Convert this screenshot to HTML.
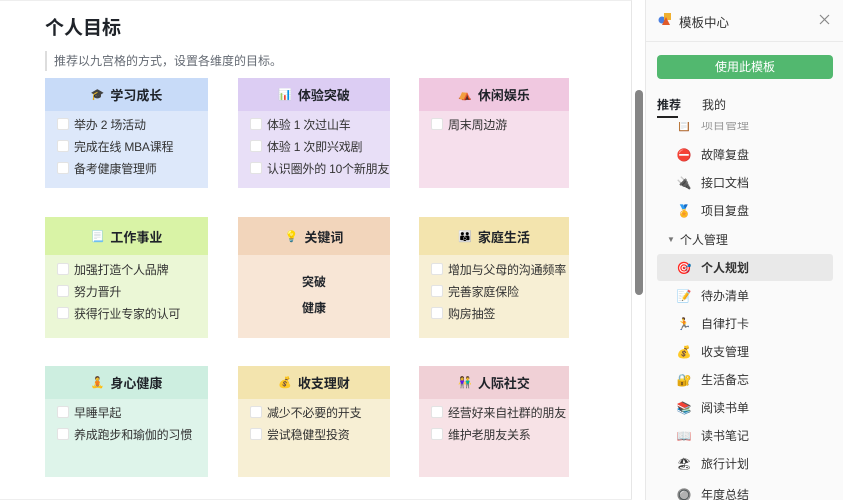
<!DOCTYPE html>
<html><head><meta charset="utf-8"><style>
*{box-sizing:border-box;margin:0;padding:0}
body{width:843px;height:500px;overflow:hidden;background:#fff;font-family:"Liberation Sans","Noto Sans CJK SC",sans-serif;color:#1f2329;position:relative}
.main{position:absolute;left:0;top:0;width:632px;height:500px;border-right:1px solid #e6e6e6;border-top:1px solid #eee}
h1{position:absolute;left:45px;top:12px;font-size:19px;font-weight:600}
.quote{position:absolute;left:45px;top:50px;height:20px;border-left:2px solid #ddd;padding-left:7px;font-size:12px;color:#646a73;line-height:20px}
.card{position:absolute}
.card .h{display:flex;align-items:center;justify-content:center;font-size:13px;font-weight:bold;gap:6px}
.card .b{padding-top:2px}
.it{display:flex;align-items:center;height:22px;padding-left:12px;font-size:12px;color:#333;white-space:nowrap;letter-spacing:-0.2px}
.cb{width:12px;height:12px;background:#fff;border:1px solid #e3e3e3;border-radius:2px;margin-right:5px;flex:none}
.kw{text-align:center;font-size:12px;font-weight:bold;line-height:26px;padding-top:14px}
.ico{font-size:11px}
.scroll{position:absolute;left:635px;top:90px;width:8px;height:205px;background:#858585;border-radius:4px}
.side{position:absolute;left:645px;top:0;width:198px;height:500px;background:#fafafa;border-left:1px solid #e8e8e8;overflow:hidden}
.sh{height:42px;border-bottom:1px solid #eaeaea;position:relative}
.sh .t{position:absolute;left:33px;top:12px;font-size:12.5px;color:#333}
.btn{position:absolute;left:11px;top:55px;width:176px;height:24px;background:#52b86f;border-radius:4px;color:#fff;font-size:12px;text-align:center;line-height:24px}
.tabs{position:absolute;left:11px;top:96px;font-size:12px}
.tabs span{position:absolute;white-space:nowrap}
.ul{position:absolute;left:11px;top:116px;width:21px;height:2px;background:#222}
.li{position:absolute;left:11px;width:176px;height:27px;font-size:12px;color:#333;display:flex;align-items:center}
.li .e{width:44px;text-align:center;font-size:12px;padding-left:10px}
.li.sel{background:#e9e9e9;border-radius:3px;font-weight:600}
</style></head><body>
<div class="main">
<h1>个人目标</h1>
<div class="quote">推荐以九宫格的方式，设置各维度的目标。</div>

<div class="card" style="left:45px;top:77px;width:163px;height:110px;background:#dde8fa"><div class="h" style="height:33px;background:#c8dbf8"><span class="ico">🎓</span>学习成长</div><div class="b"><div class="it"><i class="cb"></i>举办 2 场活动</div><div class="it"><i class="cb"></i>完成在线 MBA课程</div><div class="it"><i class="cb"></i>备考健康管理师</div></div></div>
<div class="card" style="left:238px;top:77px;width:152px;height:110px;background:#e8dff7"><div class="h" style="height:33px;background:#dccdf3"><span class="ico">📊</span>体验突破</div><div class="b"><div class="it"><i class="cb"></i>体验 1 次过山车</div><div class="it"><i class="cb"></i>体验 1 次即兴戏剧</div><div class="it"><i class="cb"></i>认识圈外的 10个新朋友</div></div></div>
<div class="card" style="left:419px;top:77px;width:150px;height:110px;background:#f6dfec"><div class="h" style="height:33px;background:#f0c8e0"><span class="ico">⛺</span>休闲娱乐</div><div class="b"><div class="it"><i class="cb"></i>周末周边游</div></div></div>

<div class="card" style="left:45px;top:216px;width:163px;height:121px;background:#ebf7d6"><div class="h" style="height:38px;background:#d9f3a6"><span class="ico">📃</span>工作事业</div><div class="b" style="padding-top:3px"><div class="it"><i class="cb"></i>加强打造个人品牌</div><div class="it"><i class="cb"></i>努力晋升</div><div class="it"><i class="cb"></i>获得行业专家的认可</div></div></div>
<div class="card" style="left:238px;top:216px;width:152px;height:121px;background:#f8e6d6"><div class="h" style="height:38px;background:#f2d5bb"><span class="ico">💡</span>关键词</div><div class="kw">突破<br>健康</div></div>
<div class="card" style="left:419px;top:216px;width:150px;height:121px;background:#f7efd4"><div class="h" style="height:38px;background:#f3e4ae"><span class="ico">👪</span>家庭生活</div><div class="b" style="padding-top:3px"><div class="it"><i class="cb"></i>增加与父母的沟通频率</div><div class="it"><i class="cb"></i>完善家庭保险</div><div class="it"><i class="cb"></i>购房抽签</div></div></div>

<div class="card" style="left:45px;top:365px;width:163px;height:111px;background:#def4ea"><div class="h" style="height:33px;background:#cdeee0"><span class="ico">🧘</span>身心健康</div><div class="b"><div class="it"><i class="cb"></i>早睡早起</div><div class="it"><i class="cb"></i>养成跑步和瑜伽的习惯</div></div></div>
<div class="card" style="left:238px;top:365px;width:152px;height:111px;background:#f7efd4"><div class="h" style="height:33px;background:#f3e4ae"><span class="ico">💰</span>收支理财</div><div class="b"><div class="it"><i class="cb"></i>减少不必要的开支</div><div class="it"><i class="cb"></i>尝试稳健型投资</div></div></div>
<div class="card" style="left:419px;top:365px;width:150px;height:111px;background:#f7e2e6"><div class="h" style="height:33px;background:#f0d0d6"><span class="ico">👫</span>人际社交</div><div class="b"><div class="it"><i class="cb"></i>经营好来自社群的朋友</div><div class="it"><i class="cb"></i>维护老朋友关系</div></div></div>
<div style="position:absolute;left:0;top:498px;width:632px;height:1px;background:#eee"></div>
</div>
<div class="scroll"></div>
<div class="side">
<div class="sh"><svg style="position:absolute;left:12px;top:12px" width="14" height="14" viewBox="0 0 14 14"><circle cx="4" cy="8" r="3.5" fill="#4a7fe0"/><rect x="6" y="1" width="7" height="7" fill="#f0b030"/><path d="M4 13 L8 5 L12 13Z" fill="#e05a2a"/></svg><span class="t">模板中心</span><svg style="position:absolute;left:173px;top:14px" width="11" height="11" viewBox="0 0 11 11"><path d="M1 1L10 10M10 1L1 10" stroke="#888" stroke-width="1.2"/></svg></div>
<div class="btn">使用此模板</div>
<div class="li" style="top:111px;font-size:12px;color:#999"><span class="e">📋</span>项目管理</div>
<div style="position:absolute;left:0;top:82px;width:198px;height:40px;background:#fafafa"></div>
<div class="tabs"><span style="left:0;font-weight:bold">推荐</span><span style="left:45px;color:#333">我的</span></div>
<div class="ul"></div>
<div class="li" style="top:141px"><span class="e">⛔</span>故障复盘</div>
<div class="li" style="top:169px"><span class="e">🔌</span>接口文档</div>
<div class="li" style="top:197px"><span class="e">🏅</span>项目复盘</div>
<div class="li" style="top:226px;padding-left:10px"><span style="font-size:8px;color:#777;margin-right:5px">▼</span>个人管理</div>
<div class="li sel" style="top:254px"><span class="e">🎯</span>个人规划</div>
<div class="li" style="top:282px"><span class="e">📝</span>待办清单</div>
<div class="li" style="top:310px"><span class="e">🏃</span>自律打卡</div>
<div class="li" style="top:338px"><span class="e">💰</span>收支管理</div>
<div class="li" style="top:366px"><span class="e">🔐</span>生活备忘</div>
<div class="li" style="top:394px"><span class="e">📚</span>阅读书单</div>
<div class="li" style="top:422px"><span class="e">📖</span>读书笔记</div>
<div class="li" style="top:450px"><span class="e">🏖</span>旅行计划</div>
<div class="li" style="top:481px"><span class="e">🔘</span>年度总结</div>
</div>
</body></html>
